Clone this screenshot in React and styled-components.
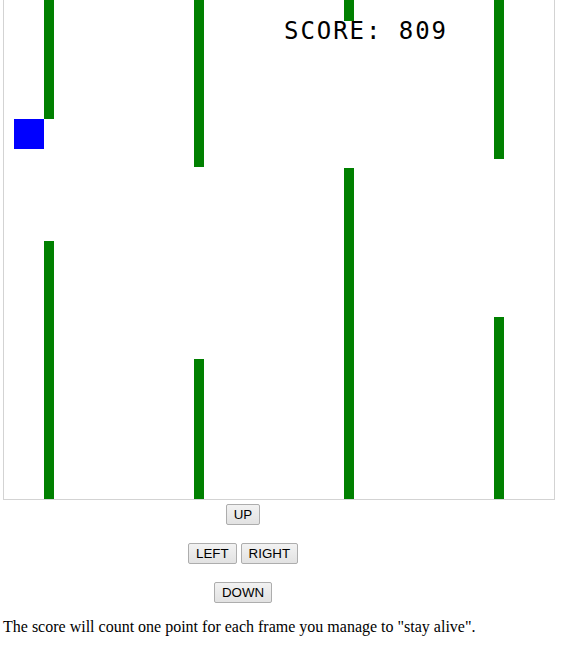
import React from 'react';
import styled, { createGlobalStyle } from 'styled-components';

const GlobalStyle = createGlobalStyle`
  html, body {
    margin: 0;
    padding: 0;
    background: #ffffff;
  }
  body {
    font-family: "Liberation Serif", "Times New Roman", serif;
    font-size: 16px;
    color: #000;
  }
`;

const Page = styled.div`
  padding-left: 3px;
`;

const GameFrame = styled.div`
  width: 550px;
  height: 499px;
  border: 1px solid #d3d3d3;
  border-top: none;
  background: #fff;
  svg {
    display: block;
  }
`;

const Controls = styled.div`
  width: 480px;
  margin-top: 4px;
  display: flex;
  flex-direction: column;
  align-items: center;
  gap: 18px;
`;

const ButtonRow = styled.div`
  display: flex;
  justify-content: center;
  gap: 4px;
`;

const ControlButton = styled.button`
  height: 21px;
  padding: 0 7px;
  margin: 0;
  font-family: "Liberation Sans", Arial, sans-serif;
  font-size: 13.33px;
  color: #000;
  background: linear-gradient(#f2f2f2, #e2e2e2);
  border: 1px solid #adadad;
  border-radius: 2px;
  line-height: 19px;
`;

const Note = styled.p`
  margin: 15px 0 0;
  line-height: 18px;
`;

const pipes = [
  { x: 40, top: 119, bottom: 241 },
  { x: 190, top: 167, bottom: 359 },
  { x: 340, top: 21, bottom: 168 },
  { x: 490, top: 159, bottom: 317 },
];

const GameCanvas = () => (
  <svg width="550" height="499" viewBox="0 0 550 499">
    {pipes.map((p) => (
      <g key={p.x} fill="#008000">
        <rect x={p.x} y="0" width="10" height={p.top} />
        <rect x={p.x} y={p.bottom} width="10" height={499 - p.bottom} />
      </g>
    ))}
    <rect x="10" y="119" width="30" height="30" fill="#0000ff" />
    <text
      x="280"
      y="38.5"
      fontFamily='"DejaVu Sans Mono", "Liberation Mono", monospace'
      fontSize="24"
      textLength="162"
      lengthAdjust="spacing"
      fill="#000"
    >
      SCORE: 809
    </text>
  </svg>
);

export default function App() {
  return (
    <Page>
      <GlobalStyle />
      <GameFrame>
        <GameCanvas />
      </GameFrame>
      <Controls>
        <ButtonRow>
          <ControlButton>UP</ControlButton>
        </ButtonRow>
        <ButtonRow>
          <ControlButton>LEFT</ControlButton>
          <ControlButton>RIGHT</ControlButton>
        </ButtonRow>
        <ButtonRow>
          <ControlButton>DOWN</ControlButton>
        </ButtonRow>
      </Controls>
      <Note>The score will count one point for each frame you manage to "stay alive".</Note>
    </Page>
  );
}
